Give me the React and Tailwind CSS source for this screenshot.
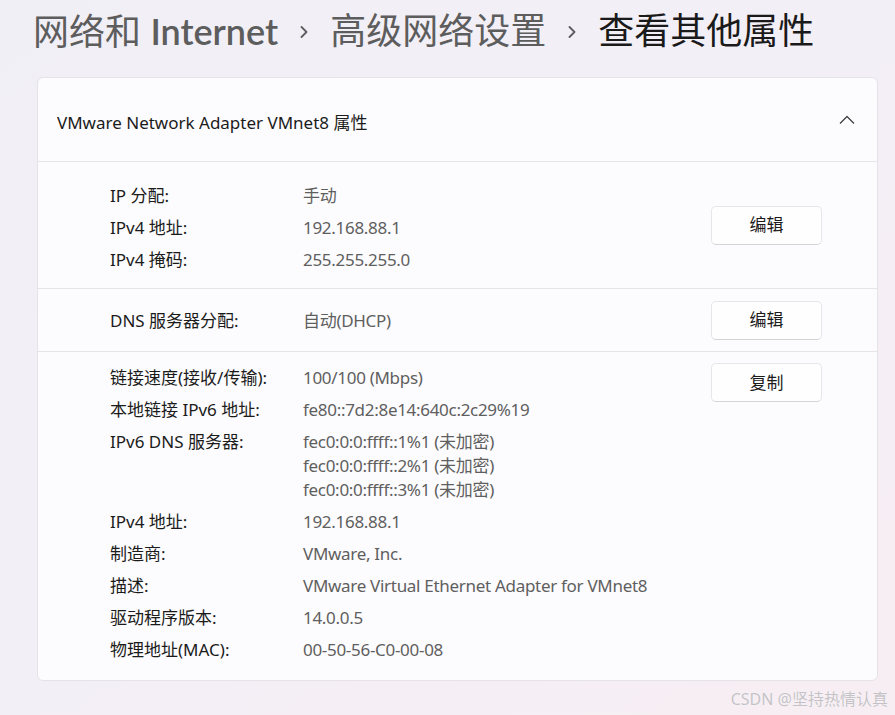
import React from 'react';

const font = "font-[family-name:'Noto_Sans','Noto_Sans_CJK_SC',sans-serif]";

const Crumb = () => (
  <svg width="8" height="12" viewBox="0 0 8 12" className="mx-[22px] mt-[2px] shrink-0">
    <path d="M1.5 1 L6.5 6 L1.5 11" fill="none" stroke="#5d5d5d" strokeWidth="1.8" strokeLinecap="round" strokeLinejoin="round" />
  </svg>
);

const Row = ({ label, children }) => (
  <div className="grid grid-cols-[193px_1fr] leading-[24px]">
    <div className="text-[#1b1b1b]">{label}</div>
    <div className="text-[#5f5f5f] tracking-[-0.3px]">{children}</div>
  </div>
);

const Button = ({ children, className = '' }) => (
  <button className={`w-[111px] h-[39px] shrink-0 rounded-[5px] bg-[#fefefe] border border-[#e6e5e8] border-b-[#d3d2d6] text-[17px] text-[#1b1b1b] ${className}`}>
    {children}
  </button>
);

const App = () => {
  return (
    <div className={`relative w-[895px] h-[715px] overflow-hidden bg-gradient-to-br from-[#f1eff6] via-[#f3eff6] to-[#f7eef3] ${font}`}>
      {/* Breadcrumb */}
      <div className="flex items-center mt-[9px] pl-[33px] h-[44px] text-[36px] leading-[44px]">
        <span className="text-[#5d5d5d]">网络和 <span className="font-[family-name:Lato,'Noto_Sans',sans-serif] font-semibold">Internet</span></span>
        <Crumb />
        <span className="text-[#5d5d5d]">高级网络设置</span>
        <Crumb />
        <span className="text-[#1a1a1a]">查看其他属性</span>
      </div>

      {/* Card */}
      <div className="ml-[37px] mt-[24px] w-[841px] rounded-[6px] border border-[#e5e3e8] bg-[#fcfbfd] text-[17px]">
        <div className="flex items-center h-[84px] pl-[19px] pr-[22px] border-b border-[#e6e4e8]">
          <div className="pt-[7px] text-[#1b1b1b]">VMware Network Adapter VMnet8 属性</div>
          <svg width="16" height="10" viewBox="0 0 16 10" className="ml-auto">
            <path d="M1 8.5 L8 1.5 L15 8.5" fill="none" stroke="#3c3c3c" strokeWidth="1.2" strokeLinejoin="round" />
          </svg>
        </div>

        <div className="flex items-center pl-[72px] pr-[55px] border-b border-[#e6e4e8]">
          <div className="flex-1 flex flex-col gap-[8px] pt-[22px] pb-[16px]">
            <Row label="IP 分配:">手动</Row>
            <Row label="IPv4 地址:">192.168.88.1</Row>
            <Row label="IPv4 掩码:">255.255.255.0</Row>
          </div>
          <Button>编辑</Button>
        </div>

        <div className="flex items-center pl-[72px] pr-[55px] border-b border-[#e6e4e8]">
          <div className="flex-1 pt-[20px] pb-[18px]">
            <Row label="DNS 服务器分配:">自动(DHCP)</Row>
          </div>
          <Button>编辑</Button>
        </div>

        <div className="flex items-start pl-[72px] pr-[55px]">
          <div className="flex-1 flex flex-col gap-[8px] pt-[14px] pb-[18px]">
            <Row label="链接速度(接收/传输):">100/100 (Mbps)</Row>
            <Row label="本地链接 IPv6 地址:">fe80::7d2:8e14:640c:2c29%19</Row>
            <Row label="IPv6 DNS 服务器:">
              <div>fec0:0:0:ffff::1%1 (未加密)</div>
              <div>fec0:0:0:ffff::2%1 (未加密)</div>
              <div>fec0:0:0:ffff::3%1 (未加密)</div>
            </Row>
            <Row label="IPv4 地址:">192.168.88.1</Row>
            <Row label="制造商:">VMware, Inc.</Row>
            <Row label="描述:">VMware Virtual Ethernet Adapter for VMnet8</Row>
            <Row label="驱动程序版本:">14.0.0.5</Row>
            <Row label="物理地址(MAC):">00-50-56-C0-00-08</Row>
          </div>
          <Button className="mt-[11px]">复制</Button>
        </div>
      </div>

      {/* Watermark */}
      <div className="absolute right-[7px] bottom-[4px] text-[16px] text-[#c4c2c6] [text-shadow:0_0_1px_#ffffff]">
        CSDN @坚持热情认真
      </div>
    </div>
  );
};

export default App;
